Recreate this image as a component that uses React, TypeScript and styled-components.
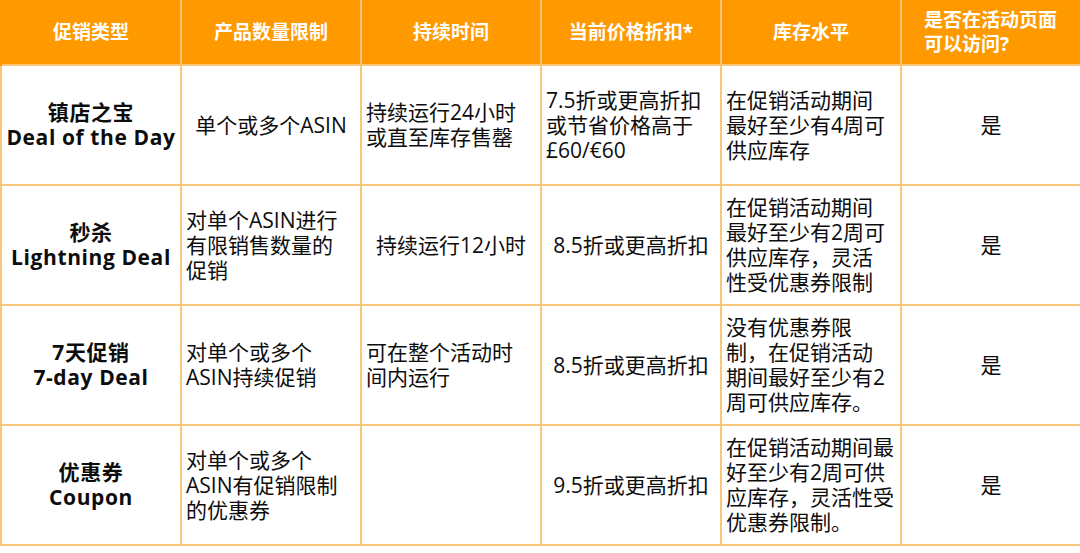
import React from "react";
import styled, { createGlobalStyle } from "styled-components";

const GlobalStyle = createGlobalStyle`
  body {
    margin: 0;
    background: #ffffff;
    font-family: "Open Sans", "Noto Sans CJK SC", sans-serif;
  }
`;

const Table = styled.table`
  width: 1080px;
  table-layout: fixed;
  border-collapse: collapse;
  color: #0d0d0d;
`;

const Column = styled.col`
  width: 180px;
`;

const HeadRow = styled.tr`
  height: 65px;
`;

const HeadCell = styled.th`
  background: #ff9900;
  color: #fff;
  font-size: 19px;
  font-weight: 700;
  line-height: 24px;
  padding: 0 6px;
  text-align: center;
  border-left: 2px solid #fcc676;
  border-right: 2px solid #fcc676;
  &:first-child {
    border-left-color: #ff9900;
  }
  &:last-child {
    border-right-color: #ff9900;
    text-align: left;
    padding-left: 22px;
  }
`;

const Row = styled.tr`
  height: 120px;
`;

const Cell = styled.td<{ $align?: string; $bold?: boolean }>`
  border: 2px solid #f9c77c;
  padding: 0 4px;
  vertical-align: middle;
  text-align: ${(p) => p.$align || "left"};
  font-size: 21px;
  line-height: 25px;
  font-weight: ${(p) => (p.$bold ? 700 : 400)};
  white-space: pre-line;
  letter-spacing: ${(p) => (p.$bold ? "0.6px" : "0")};
`;

const headers = [
  "促销类型",
  "产品数量限制",
  "持续时间",
  "当前价格折扣*",
  "库存水平",
  "是否在活动页面\n可以访问?",
];

type Col = { text: string; align?: string };

const rows: Col[][] = [
  [
    { text: "镇店之宝\nDeal of the Day", align: "center" },
    { text: "单个或多个ASIN", align: "center" },
    { text: "持续运行24小时\n或直至库存售罄" },
    { text: "7.5折或更高折扣\n或节省价格高于\n£60/€60" },
    { text: "在促销活动期间\n最好至少有4周可\n供应库存" },
    { text: "是", align: "center" },
  ],
  [
    { text: "秒杀\nLightning Deal", align: "center" },
    { text: "对单个ASIN进行\n有限销售数量的\n促销" },
    { text: "持续运行12小时", align: "center" },
    { text: "8.5折或更高折扣", align: "center" },
    { text: "在促销活动期间\n最好至少有2周可\n供应库存，灵活\n性受优惠券限制" },
    { text: "是", align: "center" },
  ],
  [
    { text: "7天促销\n7-day Deal", align: "center" },
    { text: "对单个或多个\nASIN持续促销" },
    { text: "可在整个活动时\n间内运行" },
    { text: "8.5折或更高折扣", align: "center" },
    { text: "没有优惠券限\n制，在促销活动\n期间最好至少有2\n周可供应库存。" },
    { text: "是", align: "center" },
  ],
  [
    { text: "优惠券\nCoupon", align: "center" },
    { text: "对单个或多个\nASIN有促销限制\n的优惠券" },
    { text: "" },
    { text: "9.5折或更高折扣", align: "center" },
    { text: "在促销活动期间最\n好至少有2周可供\n应库存，灵活性受\n优惠券限制。" },
    { text: "是", align: "center" },
  ],
];

export default function App() {
  return (
    <>
      <GlobalStyle />
      <Table>
        <colgroup>
          {headers.map((_, i) => (
            <Column key={i} />
          ))}
        </colgroup>
        <thead>
          <HeadRow>
            {headers.map((h, i) => (
              <HeadCell key={i}>
                {h.split("\n").map((line, j) => (
                  <div key={j}>{line}</div>
                ))}
              </HeadCell>
            ))}
          </HeadRow>
        </thead>
        <tbody>
          {rows.map((r, i) => (
            <Row key={i}>
              {r.map((c, j) => (
                <Cell key={j} $align={c.align} $bold={j === 0}>
                  {c.text}
                </Cell>
              ))}
            </Row>
          ))}
        </tbody>
      </Table>
    </>
  );
}
